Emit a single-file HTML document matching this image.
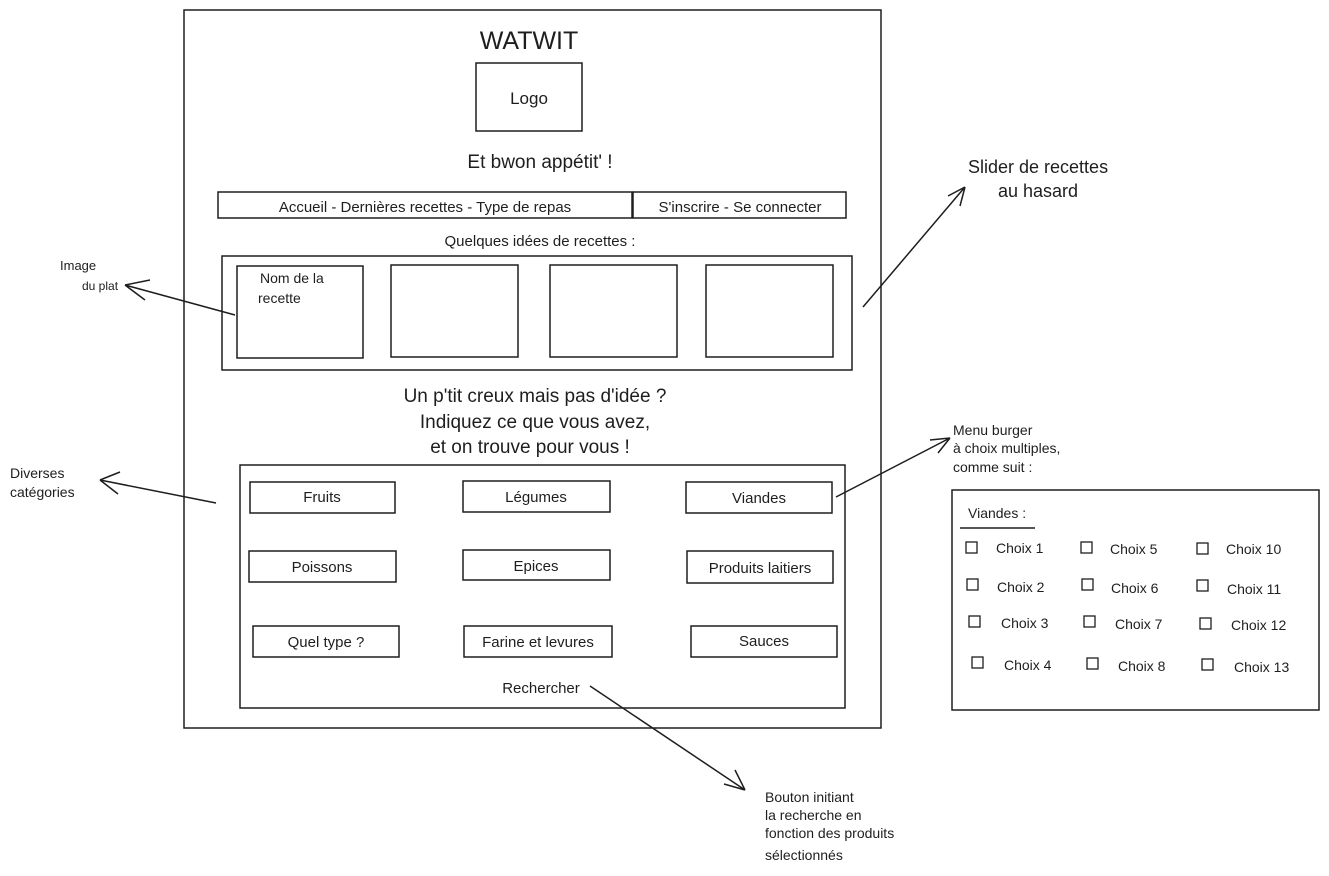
<!DOCTYPE html>
<html><head><meta charset="utf-8"><style>
html,body{margin:0;padding:0;background:#fff;width:1329px;height:876px;overflow:hidden}
svg{display:block}
text{font-family:"Liberation Sans",sans-serif;fill:#1e1e1e}
</style></head><body>
<svg width="1329" height="876" viewBox="0 0 1329 876" xmlns="http://www.w3.org/2000/svg">
<g fill="none" stroke="#1e1e1e" stroke-width="1.5">
<rect x="184" y="10" width="697" height="718"/>
<rect x="476" y="63" width="106" height="68"/>
<rect x="218" y="192" width="414" height="26"/>
<rect x="633" y="192" width="213" height="26"/>
<rect x="222" y="256" width="630" height="114"/>
<rect x="237" y="266" width="126" height="92"/>
<rect x="391" y="265" width="127" height="92"/>
<rect x="550" y="265" width="127" height="92"/>
<rect x="706" y="265" width="127" height="92"/>
<rect x="240" y="465" width="605" height="243"/>
<rect x="250" y="482" width="145" height="31"/>
<rect x="463" y="481" width="147" height="31"/>
<rect x="686" y="482" width="146" height="31"/>
<rect x="249" y="551" width="147" height="31"/>
<rect x="463" y="550" width="147" height="30"/>
<rect x="687" y="551" width="146" height="32"/>
<rect x="253" y="626" width="146" height="31"/>
<rect x="464" y="626" width="148" height="31"/>
<rect x="691" y="626" width="146" height="31"/>
<rect x="952" y="490" width="367" height="220"/>
<line x1="960" y1="528" x2="1035" y2="528"/>
<path d="M235 315 L125 285 M125 285 L150 280 M125 285 L145 300"/>
<path d="M863 307 L965 187 M965 187 L948 196 M965 187 L960 206"/>
<path d="M836 497 L950 438 M950 438 L930 440 M950 438 L938 453"/>
<path d="M216 503 L100 480 M100 480 L120 472 M100 480 L118 494"/>
<path d="M590 686 L745 790 M745 790 L735 770 M745 790 L724 784"/>
<g stroke-width="1.3">
<rect x="966" y="542" width="11" height="11"/><rect x="1081" y="542" width="11" height="11"/><rect x="1197" y="543" width="11" height="11"/>
<rect x="967" y="579" width="11" height="11"/><rect x="1082" y="579" width="11" height="11"/><rect x="1197" y="580" width="11" height="11"/>
<rect x="969" y="616" width="11" height="11"/><rect x="1084" y="616" width="11" height="11"/><rect x="1200" y="618" width="11" height="11"/>
<rect x="972" y="657" width="11" height="11"/><rect x="1087" y="658" width="11" height="11"/><rect x="1202" y="659" width="11" height="11"/>
</g>
</g>
<g text-anchor="middle">
<text x="529" y="49" font-size="25">WATWIT</text>
<text x="529" y="104" font-size="17">Logo</text>
<text x="540" y="168" font-size="19">Et bwon appétit' !</text>
<text x="425" y="212" font-size="15">Accueil - Dernières recettes - Type de repas</text>
<text x="740" y="212" font-size="15">S'inscrire - Se connecter</text>
<text x="540" y="246" font-size="15">Quelques idées de recettes :</text>
<text x="535" y="402" font-size="19">Un p'tit creux mais pas d'idée ?</text>
<text x="535" y="428" font-size="19">Indiquez ce que vous avez,</text>
<text x="530" y="453" font-size="19">et on trouve pour vous !</text>
<text x="322" y="502" font-size="15">Fruits</text>
<text x="536" y="502" font-size="15">Légumes</text>
<text x="759" y="503" font-size="15">Viandes</text>
<text x="322" y="572" font-size="15">Poissons</text>
<text x="536" y="571" font-size="15">Epices</text>
<text x="760" y="573" font-size="15">Produits laitiers</text>
<text x="326" y="647" font-size="15">Quel type ?</text>
<text x="538" y="647" font-size="15">Farine et levures</text>
<text x="764" y="646" font-size="15">Sauces</text>
<text x="541" y="693" font-size="15">Rechercher</text>
</g>
<g font-size="14">
<text x="260" y="283">Nom de la</text>
<text x="258" y="303">recette</text>
<text x="60" y="270" font-size="13">Image</text>
<text x="82" y="290" font-size="12">du plat</text>
<text x="10" y="478">Diverses</text>
<text x="10" y="497">catégories</text>
<text x="953" y="435">Menu burger</text>
<text x="953" y="453">à choix multiples,</text>
<text x="953" y="472">comme suit :</text>
<text x="968" y="518">Viandes :</text>
<text x="765" y="802">Bouton initiant</text>
<text x="765" y="820">la recherche en</text>
<text x="765" y="838">fonction des produits</text>
<text x="765" y="860">sélectionnés</text>
<text x="996" y="553">Choix 1</text><text x="1110" y="554">Choix 5</text><text x="1226" y="554">Choix 10</text>
<text x="997" y="592">Choix 2</text><text x="1111" y="593">Choix 6</text><text x="1227" y="594">Choix 11</text>
<text x="1001" y="628">Choix 3</text><text x="1115" y="629">Choix 7</text><text x="1231" y="630">Choix 12</text>
<text x="1004" y="670">Choix 4</text><text x="1118" y="671">Choix 8</text><text x="1234" y="672">Choix 13</text>
</g>
<text x="968" y="173" font-size="18">Slider de recettes</text>
<text x="998" y="197" font-size="18">au hasard</text>
</svg>
</body></html>
